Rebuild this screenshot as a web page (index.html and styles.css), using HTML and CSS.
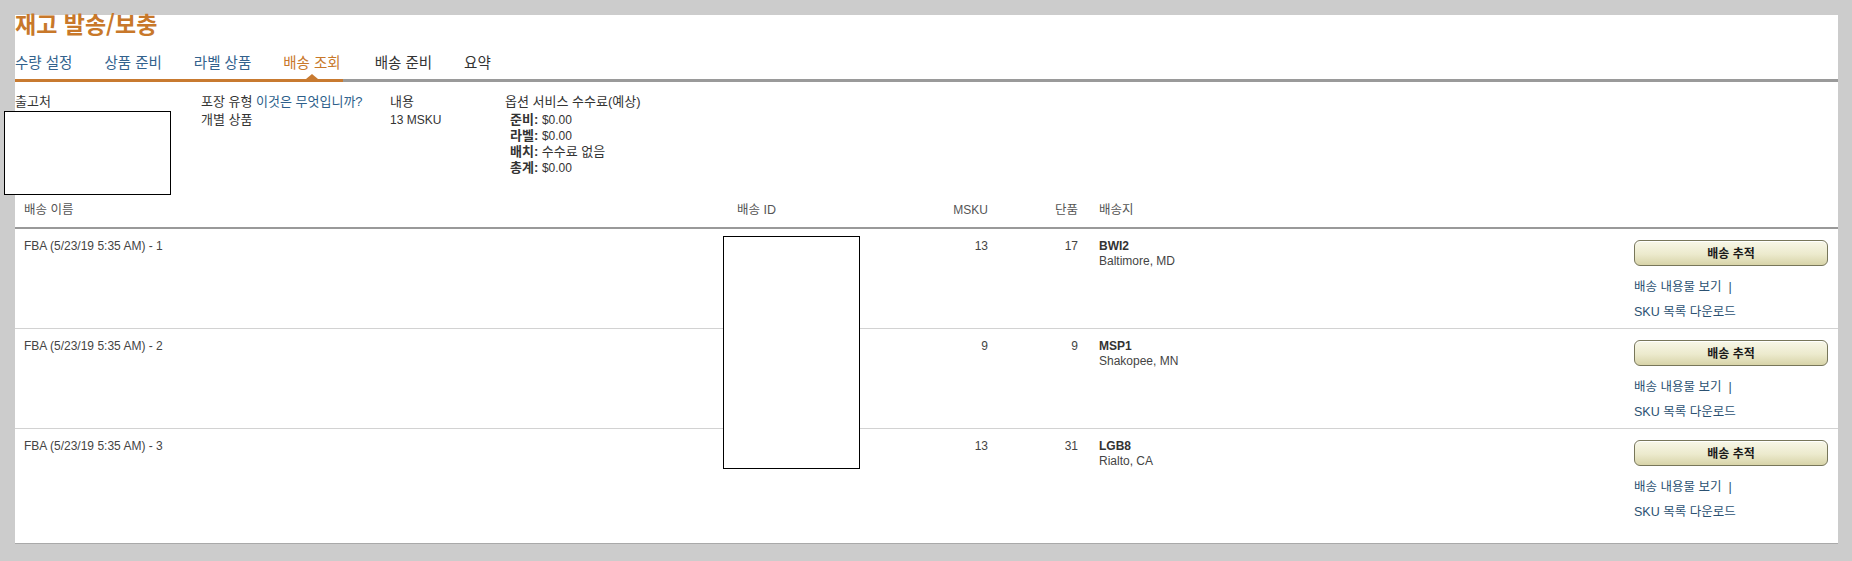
FILE: index.html
```html
<!DOCTYPE html>
<html lang="ko">
<head>
<meta charset="utf-8">
<title>재고 발송/보충</title>
<link rel="stylesheet" href="styles.css">
</head>
<body>
<div class="panel">
  <h1 class="title">재고 발송/보충</h1>
  <div class="tabs">
    <span class="tab done first"><span class="label">수량 설정</span></span>
    <span class="tab done"><span class="label">상품 준비</span></span>
    <span class="tab done"><span class="label">라벨 상품</span></span>
    <span class="tab active"><span class="label">배송 조회</span></span>
    <span class="tab todo"><span class="label">배송 준비</span></span>
    <span class="tab todo"><span class="label">요약</span></span>
    <span class="tab-fill"></span>
  </div>
  <div class="info">
    <div class="info-col">
      <div class="info-head">출고처</div>
    </div>
    <div class="info-col">
      <div class="info-head">포장 유형 <a class="help">이것은 무엇입니까?</a></div>
      <div class="info-line">개별 상품</div>
    </div>
    <div class="info-col">
      <div class="info-head">내용</div>
      <div class="info-line"><span class="n">13 MSKU</span></div>
    </div>
    <div class="info-col">
      <div class="info-head">옵션 서비스 수수료(예상)</div>
      <div class="info-line fee"><b>준비:</b> <span class="n">$0.00</span></div>
      <div class="info-line fee"><b>라벨:</b> <span class="n">$0.00</span></div>
      <div class="info-line fee"><b>배치:</b> 수수료 없음</div>
      <div class="info-line fee"><b>총계:</b> <span class="n">$0.00</span></div>
    </div>
  </div>
  <div class="table">
    <div class="row head">
      <div class="cell name">배송 이름</div>
      <div class="cell sid">배송 ID</div>
      <div class="cell num">MSKU</div>
      <div class="cell num">단품</div>
      <div class="cell dest">배송지</div>
      <div class="cell act"></div>
    </div>
    <div class="row">
      <div class="cell name">FBA (5/23/19 5:35 AM) - 1</div>
      <div class="cell sid"></div>
      <div class="cell num">13</div>
      <div class="cell num">17</div>
      <div class="cell dest"><div class="fc">BWI2</div><div>Baltimore, MD</div></div>
      <div class="cell act">
        <button class="track">배송 추적</button>
        <a class="alink">배송 내용물 보기 &nbsp;|</a>
        <a class="alink second">SKU 목록 다운로드</a>
      </div>
    </div>
    <div class="row">
      <div class="cell name">FBA (5/23/19 5:35 AM) - 2</div>
      <div class="cell sid"></div>
      <div class="cell num">9</div>
      <div class="cell num">9</div>
      <div class="cell dest"><div class="fc">MSP1</div><div>Shakopee, MN</div></div>
      <div class="cell act">
        <button class="track">배송 추적</button>
        <a class="alink">배송 내용물 보기 &nbsp;|</a>
        <a class="alink second">SKU 목록 다운로드</a>
      </div>
    </div>
    <div class="row last">
      <div class="cell name">FBA (5/23/19 5:35 AM) - 3</div>
      <div class="cell sid"></div>
      <div class="cell num">13</div>
      <div class="cell num">31</div>
      <div class="cell dest"><div class="fc">LGB8</div><div>Rialto, CA</div></div>
      <div class="cell act">
        <button class="track">배송 추적</button>
        <a class="alink">배송 내용물 보기 &nbsp;|</a>
        <a class="alink second">SKU 목록 다운로드</a>
      </div>
    </div>
  </div>
</div>
<div class="redact redact-from"></div>
<div class="redact redact-id"></div>
</body>
</html>
```
FILE: styles.css
```css
html, body {
  margin: 0;
  padding: 0;
}
body {
  background: #cccccc;
  font-family: "Liberation Sans", "Noto Sans CJK KR", sans-serif;
  color: #333333;
  position: relative;
  height: 561px;
  overflow: hidden;
}
.panel {
  margin: 15px 14px 0 15px;
  background: #ffffff;
  padding-bottom: 14px;
  border-bottom: 1px solid #a9a9a9;
}
.title {
  margin: 0;
  font-size: 23px;
  line-height: 16px;
  height: 16px;
  font-weight: bold;
  color: #c8782a;
  font-family: "Noto Sans CJK KR", "Liberation Sans", sans-serif;
}
.tabs {
  display: flex;
  font-family: "Noto Sans CJK KR", "Liberation Sans", sans-serif;
  font-size: 14.5px;
}
.tab {
  padding: 21px 0 7px 32px;
  line-height: 20px;
  border-bottom: 3px solid #c87a30;
  white-space: nowrap;
}
.tab.first {
  padding-left: 0;
}
.tab .label {
  position: relative;
  display: inline-block;
}
.tab.done {
  color: #33628d;
}
.tab.active {
  color: #c8782a;
  padding-right: 2px;
}
.tab.active .label::after {
  content: "";
  position: absolute;
  left: 50%;
  bottom: -7px;
  transform: translateX(-50%);
  border-left: 6px solid transparent;
  border-right: 6px solid transparent;
  border-bottom: 5px solid #c87a30;
}
.tab.todo {
  color: #333333;
  border-bottom-color: #9a9a9a;
}
.tab-fill {
  flex: 1;
  border-bottom: 3px solid #9a9a9a;
}
.info {
  display: grid;
  grid-template-columns: 186px 189px 115px auto;
  padding: 12px 0 16px 0;
  font-size: 13px;
  color: #333333;
}
.info-head {
  line-height: 16px;
  margin-bottom: 2px;
  white-space: nowrap;
}
.info-line {
  line-height: 16px;
  white-space: nowrap;
}
.info-line.fee {
  padding-left: 5px;
}
.n {
  font-size: 12px;
}
.help {
  color: #2d5f8b;
}
.table {
  font-size: 12.5px;
  color: #444444;
}
.row {
  display: grid;
  grid-template-columns: 712px 173px 88px 90px 556px 194px;
  height: 100px;
  box-sizing: border-box;
  border-bottom: 1px solid #d2d2d2;
}
.row.last {
  border-bottom: none;
}
.row.head {
  height: auto;
  border-bottom: 2px solid #999999;
  color: #555555;
}
.row.head .cell {
  padding-top: 10px;
  padding-bottom: 9px;
  line-height: 16px;
}
.cell {
  padding-top: 10px;
  line-height: 15px;
  white-space: nowrap;
}
.cell.name {
  padding-left: 9px;
}
.row .cell.name {
  font-size: 12px;
}
.row.head .cell.name {
  font-size: 12.5px;
}
.cell.sid {
  padding-left: 10px;
}
.cell.num {
  text-align: right;
  font-size: 12px;
}
.row.head .cell.num:nth-child(4) {
  font-size: 12.5px;
}
.cell.dest {
  padding-left: 21px;
  font-size: 12px;
}
.row.head .cell.dest {
  font-size: 12.5px;
}
.fc {
  font-weight: bold;
  color: #333333;
}
.cell.act {
  padding-top: 11px;
  display: flex;
  flex-direction: column;
  align-items: flex-start;
}
.row.head .cell.act {
  padding-top: 10px;
}
.track {
  width: 194px;
  height: 26px;
  box-sizing: border-box;
  border: 1px solid #77765a;
  border-radius: 6px;
  background: linear-gradient(#f8f7e8, #eceacd 55%, #d8d4a9);
  box-shadow: inset 0 1px 0 #ffffff;
  font-family: "Noto Sans CJK KR", "Liberation Sans", sans-serif;
  font-size: 12px;
  font-weight: bold;
  color: #1a1a1a;
  padding: 0;
  line-height: 22px;
}
.alink {
  display: block;
  margin-top: 13px;
  font-size: 12.5px;
  line-height: 16px;
  color: #2b5172;
}
.alink.second {
  margin-top: 9px;
}
.redact {
  position: absolute;
  box-sizing: border-box;
  border: 1px solid #000000;
  background: #ffffff;
}
.redact-from {
  left: 4px;
  top: 111px;
  width: 167px;
  height: 84px;
}
.redact-id {
  left: 723px;
  top: 236px;
  width: 137px;
  height: 233px;
}
```
